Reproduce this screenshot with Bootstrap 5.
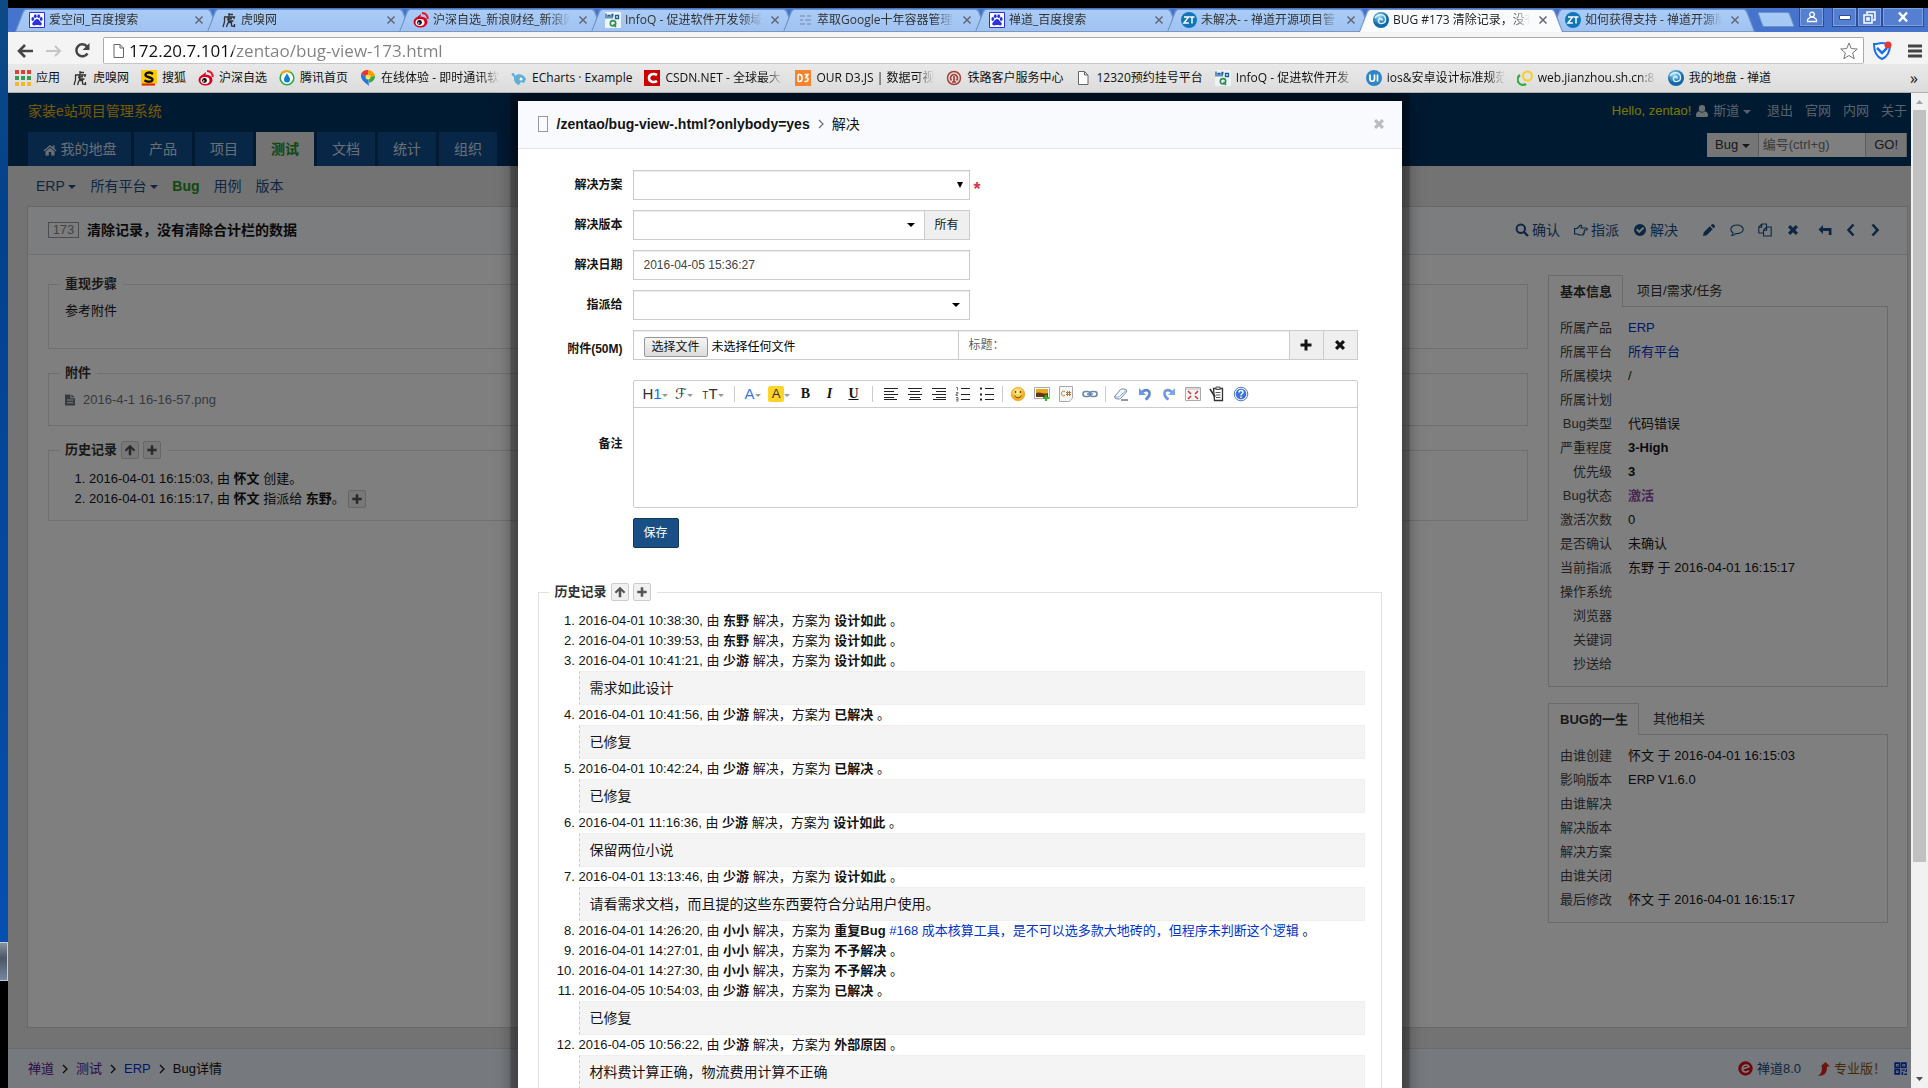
<!DOCTYPE html>
<html lang="zh-CN">
<head>
<meta charset="utf-8">
<meta name="viewport" content="width=device-width, initial-scale=1">
<title>BUG #173 清除记录，没有清除合计栏的数据</title>
<link href="https://cdn.jsdelivr.net/npm/bootstrap@5.3.0/dist/css/bootstrap.min.css" rel="stylesheet">
<style>
body{font-family:"Liberation Sans","Noto Sans CJK SC",sans-serif;font-size:13px;line-height:20px;color:#141414;background:#000;height:100vh;overflow:hidden}
a{text-decoration:none;color:#03c}
button{font-family:inherit;color:inherit}
ol,p,ul{margin:0}
svg{display:block;flex:none}
.ico{width:14px;height:14px;fill:currentColor}
.bare{border:0;background:none;padding:0}
/* desktop edge */
.desk{width:8px;background:linear-gradient(#0d4a86,#04418c 20%,#0550b0 90%)}
.desk-task{height:39px;border:1px solid #c5ccd6;border-left:0;background:linear-gradient(#8a93a0,#4b5666 40%,#74879f)}
.desk-bar{height:107px;background:#000}
/* browser */
.win{min-width:0;padding-top:8px}
.browser{font-family:"Open Sans","Noto Sans CJK SC",sans-serif;font-size:12px}
.strip{height:24px;background:#4673cb;padding-left:7px}
.btab{position:relative;width:204px;margin-right:-12px;height:24px;padding:0 15px 0 14px;gap:4px;color:#333}
.btab::before,.btab::after{content:"";position:absolute;inset:1px 0 0;background:#6f93c9;clip-path:polygon(0 100%,8px 8%,10px 0,calc(100% - 10px) 0,calc(100% - 8px) 8%,100% 100%)}
.btab::after{inset:2px 1px 0;background:linear-gradient(#aaccf6,#9fc2f2);border-bottom:1px solid #7d97be}
.btab.on{z-index:2;color:#222}
.btab.on::after{background:#fafbfd;border:0}
.btab>*{position:relative;z-index:1}
.fade-txt{overflow:hidden;white-space:nowrap;-webkit-mask-image:linear-gradient(to right,#000 85%,transparent)}
.btab .fade-txt{width:137px}
.bx{width:10px;height:10px;color:#667}
.newtab{width:32px;height:15px;background:#a6c8f5;border:1px solid #6f93c9;transform:skewX(20deg);border-radius:2px;margin-left:17px}
.wbtn{height:19px;border:1px solid #2c4f96;border-top:0;background:#5580d2;color:#fff;width:25px;display:flex;align-items:center;justify-content:center;box-shadow:inset 0 0 0 1px #7da0e0}
.wbtn.wide{width:42px}
.tools{height:32px;padding:5px 6px 0 8px;background:#f4f4f4}
.omni{height:27px;border:1px solid #aaa;border-bottom-color:#c5c5c5;border-radius:2px;background:#fff;padding:0 4px 0 8px}
.omni input{border:0;outline:0;font-family:"Open Sans",sans-serif;font-size:17px;line-height:22px;padding:0;color:#777;-webkit-text-fill-color:transparent;background:linear-gradient(to right,#111 104px,#808080 104px);-webkit-background-clip:text;background-clip:text}
.marks{height:29px;padding:1px 10px 2px 7px;gap:12px;background:linear-gradient(#e9e9e9,#dcdcdc);border-bottom:1px solid #b0b0b0}
.marks a{color:#111;display:flex;align-items:center;gap:5px}
.marks .fade-txt{width:118px}
.marks svg,.btab svg.fav{width:16px;height:16px}
/* scrollbar */
.sbar{width:17px;background:#f1f1f1;padding:0 2px}
.sbar-thumb{height:752px;background:#c1c1c1}
/* page */
.zpage{background:#e6e6e6}
.ztop{background:#003464;height:73px;padding-left:20px;color:#d5dfe9}
.brand-txt{color:#f0b400;font-size:14px}
.mnav a{display:block;height:34px;line-height:34px;width:58px;text-align:center;background:#114f8e;color:#d5dfe9;font-size:14px}
.mnav a.wide{width:103px}
.mnav a.on{background:#e6e6e6;color:#229022;font-weight:700}
.mnav{gap:3px}
.caret{display:inline-block;border:4px solid transparent;border-top-color:currentColor;border-bottom:0;vertical-align:middle}
.topbar a{color:#b5c3d2}
.toplinks{gap:12px;padding-top:8px;margin-bottom:12px}
.hello{color:#f0f000}
.qsearch{height:24px;width:200px}
.qsearch>*{border:0;border-right:1px solid #bbb;background:#ececec;font-size:13px;color:#333;padding:0;border-radius:0}
.qsearch input{background:#fff;padding-left:4px}
.snav{height:40px;padding-left:28px;font-size:14px;gap:14px}
.snav a,.acts button{color:#1a4f85}
.snav a.on{color:#229022;font-weight:700}
.zpanel{margin:0 3px 0 19px;background:#fff;border:1px solid #d0d0d0}
.zhead{height:48px;background:#f8fafe;border-bottom:1px solid #dedede;padding:0 27px 2px 20px}
.zhead strong{font-size:14px}
.zbody{padding:19px 19px 19px 20px;gap:20px}
.idtag{border:1px solid #999;color:#888;line-height:14px;width:31px;text-align:center}
.acts{font-size:14px;color:#1a4f85;gap:14px}
.acts .bare{display:flex;align-items:center;gap:3px}
.acts .slim{width:10px}
.acts .lastop{margin-right:10px}
fieldset.box{border:1px solid #e1e1e1;padding:7px 16px 11px;margin-bottom:14px}
fieldset.box legend{display:flex;align-items:center;gap:4px;float:none;width:fit-content;font-size:13px;line-height:20px;font-weight:700;margin:0 0 0 -6px;padding:0 6px;color:#333}
fieldset.hist{padding-top:9px}
.mini{width:18px;height:18px;border:1px solid #ccc;background:#f1f1f1;border-radius:2px;padding:2px;color:#555;display:inline-block;vertical-align:-4px}
.mini svg{width:12px;height:12px;fill:currentColor}
.log li .mini{vertical-align:top;margin-top:1px}
ol.log{padding-left:24px}
.zside{width:340px;padding-top:1px}
.ztabs a{display:block;height:31px;line-height:31px;padding:0 14px;color:#333}
.ztabs a.on{font-weight:700;border:1px solid #d5d5d5;border-bottom:0;background:#fff;padding:0 10px 0 11px;margin-bottom:-1px;height:32px;position:relative}
.zbox{border:1px solid #d5d5d5;padding:9px 11px 10px}
.zbox th{font-weight:400;width:52px;text-align:right;color:#444;padding:2px 0}
.zbox td{padding:2px 0 2px 16px;height:24px}
.zfoot{height:40px;margin-top:20px;background:#ecf2fb;border-top:1px solid #d5d5d5;padding-left:20px}
.visited{color:#551a8b}
/* overlay + dialog */
.shade{position:absolute;inset:0;background:rgba(0,0,0,.5);padding-top:8px;overflow:hidden;z-index:5}
.dlg{width:884px;height:1200px;background:#fff;box-shadow:0 0 0 7px rgba(0,0,0,.08),0 0 0 8px rgba(0,0,0,.15),0 0 14px 7px rgba(0,0,0,.35)}
.dlg-head{height:48px;background:#f8fafe;border-bottom:1px solid #e5e5e5;padding:0 16px 2px 20px;font-size:14px}
.tofu{width:10px;height:16px;border:1px solid #999;margin-right:9px}
.dlg-body{padding:21px 20px}
.frow{gap:10px;margin-bottom:10px;font-size:12px}
.flabel{width:85px;text-align:right;font-weight:700;flex:none;line-height:30px}
.star{font-size:18px;line-height:18px;padding-top:8px}
.f{height:30px;border:1px solid #ccc;border-radius:0;font-size:12px;line-height:18px;padding:0 10px;color:#444;background-color:#fff;box-shadow:inset 0 1px 1px rgba(0,0,0,.075)}
select.f{background-repeat:no-repeat;background-size:8px 4px;background-position:right 9px center;background-image:url("data:image/svg+xml,%3Csvg xmlns='http://www.w3.org/2000/svg' viewBox='0 0 8 4'%3E%3Cpath d='M0 0h8L4 4z'/%3E%3C/svg%3E")}
select.f.native{background-size:6px 6px;background-position:right 6px center;background-image:url("data:image/svg+xml,%3Csvg xmlns='http://www.w3.org/2000/svg' viewBox='0 0 6 6'%3E%3Cpath d='M0 0h6L3 6z'/%3E%3C/svg%3E")}
.w-ctl{width:337px}
.addon{height:30px;width:34px;flex:none;border:1px solid #ccc;border-left:0;background:#efefef;font-size:12px;display:flex;align-items:center;justify-content:center;padding:0}
.addon.all{width:45px}
.w-full{width:725px}
.w-file{width:326px;flex:none}
.pick{border:1px solid #999;border-radius:2px;background:linear-gradient(#f5f5f5,#dcdcdc);line-height:18px;padding:0 7px;color:#111}
.ked{border:1px solid #ccc;border-radius:2px}
.kbar{height:27px;border-bottom:1px solid #ccc;padding-left:7px}
.kbar button{border:0;background:none;padding:0;width:24px;height:24px;display:flex;align-items:center;justify-content:center}
.kbar button.k{font-size:15px;color:#333;width:29px}
.kbar button.k-blue{color:#3b78e7;width:24px}
.kbar i{width:7px;height:16px;background:linear-gradient(#ccc,#ccc) center/1px 100% no-repeat}
.kbar i.gapw{width:13px}
.kbar svg{width:16px;height:16px}
.kbar .caret{border-width:3px;border-bottom:0;border-top-color:#999;margin-top:2px}
.kbar .serif{font:700 14px "Liberation Serif",serif}
.k-mark{background:#ffd42a;border-radius:2px;width:16px;line-height:16px;font-size:13px}
.k-small{font-size:10px;padding-top:3px}
.k-script{font-family:"DejaVu Sans",sans-serif}
.ked textarea{display:block;border:0;width:100%;height:99px;resize:none;outline:0}
.save{height:30px;width:46px;font-size:12px;padding:0;border-radius:2px;background:#1a4f85;border:1px solid #113857;color:#fff}
.dlg .hist{margin-top:34px;height:700px}
.note{background:#f4f4f4;border:1px solid #efefef;border-left:1px dashed #ccc;padding:6px 10px;font-size:14px}
</style>
<script src="https://cdn.jsdelivr.net/npm/bootstrap@5.3.0/dist/js/bootstrap.bundle.min.js"></script>
</head>
<body>
<svg width="0" height="0" class="position-absolute" aria-hidden="true">
<defs>
<radialGradient id="gBlue" cx=".4" cy=".3"><stop offset="0" stop-color="#9be0f7"/><stop offset="1" stop-color="#1267ab"/></radialGradient>
<radialGradient id="gSm" cx=".45" cy=".35"><stop offset="0" stop-color="#fff3a0"/><stop offset="1" stop-color="#f0b020"/></radialGradient>
</defs>
<symbol id="baidu" viewBox="0 0 16 16"><path fill="#fff" stroke="#2932e1" d="M.5.5h15v15H.5z"/><g fill="#2932e1"><ellipse cx="3.8" cy="7" rx="1.4" ry="1.9"/><ellipse cx="6.3" cy="4.2" rx="1.4" ry="1.9"/><ellipse cx="9.7" cy="4.2" rx="1.4" ry="1.9"/><ellipse cx="12.2" cy="7" rx="1.4" ry="1.9"/><path d="M8 7c1.800 0 2.600 2 4 3.200s.8 3.300-1 3.300c-1.200 0-1.800-.4-3-.4s-1.800.4-3 .4c-1.800 0-2.400-2.100-1-3.300S6.200 7 8 7z"/></g></symbol>
<symbol id="huxiu" viewBox="0 0 16 16"><g fill="none" stroke="#333" stroke-width="1.300"><path d="M8 1v4M8 2.500h4M3 5h10.500l-.8 2M3.500 5v5L2 15M6 7.500l5-1M7.500 5.500v3.500h5M7 10.500 5.500 15M7 10.500h3.500v3.500l3 .5V12"/></g></symbol>
<symbol id="weibo" viewBox="0 0 16 16"><ellipse cx="7.500" cy="10" rx="7" ry="5.500" fill="#d9001b"/><path d="M9 1c4 0 6 3 5.500 6" stroke="#e6162d" stroke-width="2" fill="none"/><path d="M3 6l5-4-1 4z" fill="#d9001b"/><ellipse cx="7" cy="10.500" rx="4.500" ry="3.400" fill="#fff"/><circle cx="6.500" cy="10.500" r="2.400" fill="#111"/><circle cx="5.800" cy="11" r=".8" fill="#fff"/></symbol>
<symbol id="infoq" viewBox="0 0 16 16"><path fill="#eef3f8" d="M0 0h16v16H0z"/><path d="M1 1.500v5M3 6.500v-3h2v3M7 6.500V2.500h1.500M6.300 4h2M10.500 3.500h3v3h-3z" fill="none" stroke="#1d5f9c" stroke-width="1.300"/><circle cx="8" cy="11.300" r="2.700" fill="none" stroke="#2f8f4e" stroke-width="1.600"/><path d="M8.500 12l2.500 3" stroke="#2f8f4e" stroke-width="1.500"/></symbol>
<symbol id="lines" viewBox="0 0 16 16"><path d="M3 4h5M10 4h4M3 8h3M8 8h6M3 12h5M10 12h4" stroke="#8a9cb8" stroke-width="1.500"/></symbol>
<symbol id="zt" viewBox="0 0 16 16"><circle cx="8" cy="8" r="8" fill="#0f77b8"/><path d="M3 5h4.500L3 11h4.800M8.500 5h5M11 5v6.500" fill="none" stroke="#fff" stroke-width="1.500"/></symbol>
<symbol id="zen" viewBox="0 0 16 16"><circle cx="8" cy="8" r="8" fill="url(#gBlue)"/><path d="M2 6c3-5 10-4 10.500 1S6 13 5.500 9.500 9 6 9.500 8.500" fill="none" stroke="#d8f3fd" stroke-width="1.400"/></symbol>
<symbol id="page" viewBox="0 0 12 16"><path d="M1.500 1.500h6l3.500 3.500v9.500h-9.500zM7.500 1.500V5H11" fill="#fff" stroke="#666"/></symbol>
<symbol id="cross" viewBox="0 0 10 10"><path d="M1.500 1.500l7 7M8.500 1.500l-7 7" stroke="currentColor" stroke-width="1.500"/></symbol>
<symbol id="times" viewBox="0 0 14 14"><path d="M2 4.200 4.200 2 7 4.800 9.800 2 12 4.200 9.200 7 12 9.800 9.800 12 7 9.200 4.200 12 2 9.800 4.800 7z"/></symbol>
<symbol id="plus" viewBox="0 0 14 14"><path d="M5.500 1.500h3v4h4v3h-4v4h-3v-4h-4v-3h4z"/></symbol>
<symbol id="up" viewBox="0 0 14 14"><path d="M7 .8l6.200 6.200-1.700 1.700L8.500 5.900V13h-3V5.900L2.500 8.700.8 7z"/></symbol>
<symbol id="home" viewBox="0 0 14 14"><path d="M7 2 .5 7.500l.8.900L7 3.700l5.700 4.700.8-.9L11.500 5.800V2.500h-1.800v1.800zM7 4.800 2.500 8.500V12.500h3.300V9h2.400v3.500h3.300V8.500z"/></symbol>
<symbol id="user" viewBox="0 0 14 14"><path d="M7 1a3.200 3.400 0 0 1 3.200 3.400A3.200 3.400 0 0 1 7 7.800 3.200 3.400 0 0 1 3.800 4.400 3.200 3.400 0 0 1 7 1zM4 7.300c1.800 1.700 4.200 1.700 6 0 2.200.3 3 2.500 3 4.200 0 1-.7 1.500-1.600 1.500H2.600C1.700 13 1 12.500 1 11.500c0-1.700.8-3.900 3-4.200z"/></symbol>
<symbol id="search" viewBox="0 0 14 14"><circle cx="5.800" cy="5.800" r="4.200" fill="none" stroke="currentColor" stroke-width="2"/><path d="M9 9l4 4" stroke="currentColor" stroke-width="2.400"/></symbol>
<symbol id="hand" viewBox="0 0 14 14"><path d="M.6 5.500h2.600L6 2.500c.9-.8 2 .1 1.500 1.200L7 5h5c1.700 0 1.700 2 0 2H9.800c1 .2 1 1.500 0 1.700.8.200.7 1.400-.2 1.600.5.300.4 1.700-.9 1.700H6c-1.500 0-1.800-1-2.800-1H.6z" fill="none" stroke="currentColor" stroke-width="1.200"/></symbol>
<symbol id="okc" viewBox="0 0 14 14"><path fill-rule="evenodd" d="M7 1a6 6 0 1 1 0 12A6 6 0 0 1 7 1zM3 7l3.300 3.300 5-5-1.400-1.400-3.600 3.600L4.500 5.600z"/></symbol>
<symbol id="pencil" viewBox="0 0 14 14"><path d="M1 13l.8-3.700 6-6 2.900 2.900-6 6zM8.700 2.400 10 1.200c.4-.4 1-.4 1.400 0l1.400 1.400c.4.400.4 1 0 1.400l-1.200 1.300z"/></symbol>
<symbol id="bubble" viewBox="0 0 14 14"><path d="M7 2c3.500 0 6.200 1.900 6.200 4.300S10.500 10.600 7 10.600l-1.200-.1C5 11.500 3.500 12.300 2 12.400c.7-.8 1-1.600 1-2.600C1.600 9 .8 7.700.8 6.300.8 3.900 3.500 2 7 2z" fill="none" stroke="currentColor" stroke-width="1.100"/></symbol>
<symbol id="copy" viewBox="0 0 14 14"><path d="M5 10H.8V4L3.800 1H8.500v2.500M.8 4.200h3V1M5.500 7.200 8.500 4h4.700v9H5.500zM5.500 7.300H8.600V4" fill="none" stroke="currentColor" stroke-width="1.100"/></symbol>
<symbol id="reply" viewBox="0 0 14 14"><path d="M5 2v3h8.500v7h-2.700V8H5v3L.5 6.500z"/></symbol>
<symbol id="left" viewBox="0 0 10 14"><path d="M7.500 1.500 2.500 7l5 5.500" fill="none" stroke="currentColor" stroke-width="2.600"/></symbol>
<symbol id="right" viewBox="0 0 10 14"><path d="M2.500 1.500l5 5.500-5 5.500" fill="none" stroke="currentColor" stroke-width="2.600"/></symbol>
<symbol id="chev" viewBox="0 0 14 14"><path d="M5 3l4 4-4 4" fill="none" stroke="currentColor" stroke-width="1.300"/></symbol>
<symbol id="file" viewBox="0 0 11 14"><path fill-rule="evenodd" d="M0 1h6v4h5v8H0zM7 1l4 3H7zM2 6.500h7v1H2zm0 3h7v1H2z"/></symbol>
</svg>
<div class="d-flex h-100">
  <div class="desk d-flex flex-column justify-content-end flex-shrink-0"><div class="desk-task"></div><div class="desk-bar"></div></div>
  <div class="win d-flex flex-column flex-grow-1">
    <header class="browser">
      <div class="strip d-flex">
        <a class="btab d-flex align-items-center" href="#"><svg class="fav"><use href="#baidu"/></svg><span class="fade-txt">爱空间_百度搜索</span><svg class="bx ms-auto"><use href="#cross"/></svg></a>
        <a class="btab d-flex align-items-center" href="#"><svg class="fav"><use href="#huxiu"/></svg><span class="fade-txt">虎嗅网</span><svg class="bx ms-auto"><use href="#cross"/></svg></a>
        <a class="btab d-flex align-items-center" href="#"><svg class="fav"><use href="#weibo"/></svg><span class="fade-txt">沪深自选_新浪财经_新浪网</span><svg class="bx ms-auto"><use href="#cross"/></svg></a>
        <a class="btab d-flex align-items-center" href="#"><svg class="fav"><use href="#infoq"/></svg><span class="fade-txt">InfoQ - 促进软件开发领域</span><svg class="bx ms-auto"><use href="#cross"/></svg></a>
        <a class="btab d-flex align-items-center" href="#"><svg class="fav"><use href="#lines"/></svg><span class="fade-txt">萃取Google十年容器管理</span><svg class="bx ms-auto"><use href="#cross"/></svg></a>
        <a class="btab d-flex align-items-center" href="#"><svg class="fav"><use href="#baidu"/></svg><span class="fade-txt">禅道_百度搜索</span><svg class="bx ms-auto"><use href="#cross"/></svg></a>
        <a class="btab d-flex align-items-center" href="#"><svg class="fav"><use href="#zt"/></svg><span class="fade-txt">未解决- - 禅道开源项目管</span><svg class="bx ms-auto"><use href="#cross"/></svg></a>
        <a class="btab on d-flex align-items-center" href="#"><svg class="fav"><use href="#zen"/></svg><span class="fade-txt">BUG #173 清除记录，没有</span><svg class="bx ms-auto"><use href="#cross"/></svg></a>
        <a class="btab d-flex align-items-center" href="#"><svg class="fav"><use href="#zt"/></svg><span class="fade-txt">如何获得支持 - 禅道开源版</span><svg class="bx ms-auto"><use href="#cross"/></svg></a>
        <button class="newtab mt-1 p-0" aria-label="新标签页"></button>
        <div class="d-flex ms-auto me-1">
          <button class="wbtn me-2 p-0" aria-label="用户"><svg width="12" height="12" viewBox="0 0 12 12"><circle cx="6" cy="3.500" r="2.300" fill="none" stroke="#fff" stroke-width="1.300"/><path d="M1.500 10.500V8.500L4.500 6h3l3 2.500v2z" fill="none" stroke="#fff" stroke-width="1.300"/></svg></button>
          <button class="wbtn p-0" aria-label="最小化"><svg width="12" height="5" viewBox="0 0 12 5"><path d="M.5.500h11v4H.5z" fill="#fff" stroke="#2c4f96"/></svg></button>
          <button class="wbtn p-0" aria-label="还原"><svg width="13" height="13" viewBox="0 0 13 13"><path d="M4 3V1h8v8h-2M1 4h8v8H1zM4 7h2v2H4z" fill="none" stroke="#fff" stroke-width="1.500"/></svg></button>
          <button class="wbtn wide p-0" aria-label="关闭"><svg width="12" height="12" viewBox="0 0 12 12"><path d="M2 1.500l8 9M10 1.500l-8 9" stroke="#fff" stroke-width="2.400"/></svg></button>
        </div>
      </div>
      <div class="tools d-flex align-items-center">
        <button class="bare me-2 pe-1" aria-label="后退"><svg width="18" height="16" viewBox="0 0 18 16"><path d="M17 8H3M9 2 3 8l6 6" fill="none" stroke="#444" stroke-width="2.600"/></svg></button>
        <button class="bare me-2 pe-1" aria-label="前进"><svg width="16" height="16" viewBox="0 0 16 16"><path d="M0 8h14M9 3l5 5-5 5" fill="none" stroke="#c5c5c5" stroke-width="2"/></svg></button>
        <button class="bare me-2 pe-1" aria-label="重新加载"><svg width="17" height="17" viewBox="0 0 17 17"><path d="M13.500 11.500A6 6 0 1 1 13 4.500" fill="none" stroke="#444" stroke-width="2.500"/><path d="M15.500 1v7h-7z" fill="#444"/></svg></button>
        <div class="omni d-flex align-items-center flex-grow-1"><svg width="13" height="16"><use href="#page"/></svg><input class="flex-grow-1 ms-1" type="text" aria-label="地址" value="172.20.7.101/zentao/bug-view-173.html"><button class="bare" aria-label="收藏"><svg width="20" height="20" viewBox="0 0 20 20"><path d="M10 2l2.300 5.600 6 .4-4.600 3.900 1.500 5.900L10 14.500l-5.200 3.300 1.500-5.900L1.700 8l6-.4z" fill="#fff" stroke="#777"/></svg></button></div>
        <svg class="ms-2" width="20" height="20" viewBox="0 0 20 20"><path d="M2 3c4 0 5-1 8-1s4 1 8 1c0 8-3 13-8 15C5 16 2 11 2 3z" fill="#fff" stroke="#1f6ff0" stroke-width="2"/><path d="M5 7l5 5 5-5" fill="none" stroke="#1f6ff0" stroke-width="2.500"/><circle cx="16" cy="4" r="3.500" fill="#e33b2e"/></svg>
        <button class="bare ms-3" aria-label="菜单"><svg width="14" height="14" viewBox="0 0 14 14"><path d="M0 2h14M0 7h14M0 12h14" stroke="#444" stroke-width="2.800"/></svg></button>
      </div>
      <nav class="marks d-flex align-items-center">
        <a href="#"><svg viewBox="0 0 16 16"><g stroke-width="4" stroke-dasharray="4 2"><path d="M0 2h16" stroke="#e0402f"/><path d="M0 8h16" stroke="#3c9c57"/><path d="M0 14h16" stroke="#f0b92c"/></g></svg>应用</a>
        <a href="#"><svg><use href="#huxiu"/></svg>虎嗅网</a>
        <a href="#"><svg viewBox="0 0 16 16"><path fill="#fc0" d="M0 0h16v13l-4 3H0z"/><path d="M12 4C9 1.500 4.500 2.500 4.500 5s7 2 7 4.500-5 3-8 .8" fill="none" stroke="#111" stroke-width="2.400"/><path d="M1 14.500h13" stroke="#d22" stroke-width="2"/></svg>搜狐</a>
        <a href="#"><svg><use href="#weibo"/></svg>沪深自选</a>
        <a href="#"><svg viewBox="0 0 16 16"><circle cx="8" cy="8" r="6.800" fill="#fff" stroke="#2aa84a" stroke-width="1.600"/><path d="M2 4a7 7 0 0 1 9-2" stroke="#f5a800" stroke-width="2" fill="none"/><path d="M8 3c1 3 3 4 3 6.500a3 3 0 0 1-6 0C5 7 7 6 8 3z" fill="#0a7fd0"/></svg>腾讯首页</a>
        <a href="#"><svg viewBox="0 0 16 16"><path d="M8 7 1 4a7 7 0 0 1 7-4z" fill="#e33"/><path d="M8 7V0a7 7 0 0 1 7 6z" fill="#f90"/><path d="M8 7l7-1c0 4-3 6-6 7z" fill="#3a4"/><path d="M8 7l1 9C6 13 0 10 1 4z" fill="#27d"/><circle cx="8" cy="7" r="2.500" fill="#fd5"/></svg><span class="fade-txt">在线体验 - 即时通讯软</span></a>
        <a href="#"><svg viewBox="0 0 16 16"><path d="M1 3c2 0 3 1 3 3 3-3 9-2 11 3l-2 4-3-1-2 3C3 14 3 9 3 7 1 6 0 4 1 3z" fill="#5fb0d4"/><circle cx="10" cy="9" r="1.500" fill="#fff"/></svg>ECharts · Example</a>
        <a href="#"><svg viewBox="0 0 16 16"><path fill="#c00" d="M0 0h16v16H0z"/><path d="M13 5c-3-2-8-1-8 3s5 5 8 3" fill="none" stroke="#fff" stroke-width="2.600"/></svg><span class="fade-txt">CSDN.NET - 全球最大</span></a>
        <a href="#"><svg viewBox="0 0 16 16"><path fill="#f9832a" d="M0 0h16v16H0z"/><path d="M3 4.500v7M3 4.500h1.500C8 4.500 8 11.500 4.500 11.500H3M9.500 4.500h3.500L11 7.500c3 0 2.500 4-.5 4H9.500" fill="none" stroke="#fff" stroke-width="1.600"/></svg><span class="fade-txt">OUR D3.JS | 数据可视</span></a>
        <a href="#"><svg viewBox="0 0 16 16"><g fill="none" stroke="#a8403a"><circle cx="8" cy="8" r="6.500" stroke-width="1.500"/><path d="M5.500 10.500a3.500 3.500 0 1 1 5 0M8 6v6M6 12h4" stroke-width="1.700"/></g></svg>铁路客户服务中心</a>
        <a href="#"><svg><use href="#page"/></svg>12320预约挂号平台</a>
        <a href="#"><svg><use href="#infoq"/></svg><span class="fade-txt">InfoQ - 促进软件开发</span></a>
        <a href="#"><svg viewBox="0 0 16 16"><circle cx="8" cy="8" r="8" fill="#2e86c9"/><path d="M4 4.500v4.500c0 3 4.500 3 4.500 0V4.500M11.500 4.500v7" fill="none" stroke="#fff" stroke-width="1.700"/></svg><span class="fade-txt">ios&amp;安卓设计标准规范</span></a>
        <a href="#"><svg viewBox="0 0 16 16"><circle cx="10.500" cy="6" r="4.500" fill="none" stroke="#f5d020" stroke-width="2"/><path d="M3 5a5 5 0 0 0 6 9" fill="none" stroke="#2fae3e" stroke-width="2.200"/></svg><span class="fade-txt">web.jianzhou.sh.cn:8</span></a>
        <a href="#"><svg><use href="#zen"/></svg>我的地盘 - 禅道</a>
        <button class="bare ms-auto fs-6" aria-label="更多书签">»</button>
      </nav>
    </header>
    <div class="d-flex flex-grow-1 overflow-hidden">
      <main class="zpage position-relative d-flex flex-column flex-grow-1">
        <div class="ztop d-flex justify-content-between">
          <div class="d-flex flex-column justify-content-between">
            <div class="brand-txt pt-2">家装e站项目管理系统</div>
            <nav class="mnav d-flex">
              <a href="#" class="wide"><svg class="ico d-inline-block align-middle me-1"><use href="#home"/></svg>我的地盘</a><a href="#">产品</a><a href="#">项目</a><a href="#" class="on">测试</a><a href="#">文档</a><a href="#">统计</a><a href="#">组织</a>
            </nav>
          </div>
          <div class="topbar d-flex flex-column align-items-end me-1">
            <div class="toplinks d-flex">
              <span class="d-flex align-items-center gap-1 me-1"><span class="hello">Hello, zentao!</span><svg class="ico"><use href="#user"/></svg><a href="#">斯道 <i class="caret"></i></a></span>
              <a href="#">退出</a><a href="#">官网</a><a href="#">内网</a><a href="#">关于</a>
            </div>
            <form class="qsearch d-flex"><button type="button" class="px-2">Bug <i class="caret"></i></button><input type="text" class="flex-grow-1 w-50" aria-label="编号" placeholder="编号(ctrl+g)"><button type="button" class="px-2">GO!</button></form>
          </div>
        </div>
        <nav class="snav d-flex align-items-center"><a href="#">ERP <i class="caret"></i></a><a href="#">所有平台 <i class="caret"></i></a><a href="#" class="on">Bug</a><a href="#">用例</a><a href="#">版本</a></nav>
        <section class="zpanel flex-grow-1">
          <div class="zhead d-flex align-items-center">
            <span class="idtag me-2">173</span><strong>清除记录，没有清除合计栏的数据</strong>
            <div class="acts d-flex ms-auto align-items-center">
              <button class="bare"><svg class="ico"><use href="#search"/></svg>确认</button>
              <button class="bare"><svg class="ico"><use href="#hand"/></svg>指派</button>
              <button class="bare lastop"><svg class="ico"><use href="#okc"/></svg>解决</button>
              <button class="bare" aria-label="编辑"><svg class="ico"><use href="#pencil"/></svg></button>
              <button class="bare" aria-label="备注"><svg class="ico"><use href="#bubble"/></svg></button>
              <button class="bare" aria-label="复制"><svg class="ico"><use href="#copy"/></svg></button>
              <button class="bare me-1" aria-label="删除"><svg class="ico"><use href="#times"/></svg></button>
              <button class="bare" aria-label="返回"><svg class="ico"><use href="#reply"/></svg></button>
              <button class="bare" aria-label="上一个"><svg class="ico slim"><use href="#left"/></svg></button>
              <button class="bare" aria-label="下一个"><svg class="ico slim"><use href="#right"/></svg></button>
            </div>
          </div>
          <div class="zbody d-flex">
            <div class="flex-grow-1">
              <fieldset class="box"><legend>重现步骤</legend><p class="pb-3">参考附件</p></fieldset>
              <fieldset class="box"><legend>附件</legend><a href="#" class="d-flex align-items-center gap-2 mb-1 text-secondary"><svg class="ico slim" style="width:10px"><use href="#file"/></svg>2016-4-1 16-16-57.png</a></fieldset>
              <fieldset class="box hist"><legend>历史记录 <button class="mini" aria-label="倒序"><svg><use href="#up"/></svg></button> <button class="mini" aria-label="展开"><svg><use href="#plus"/></svg></button></legend>
                <ol class="log"><li>2016-04-01 16:15:03, 由 <b>怀文</b> 创建。</li><li>2016-04-01 16:15:17, 由 <b>怀文</b> 指派给 <b>东野</b>。 <button class="mini" aria-label="展开"><svg><use href="#plus"/></svg></button></li></ol></fieldset>
            </div>
            <aside class="zside flex-shrink-0">
              <nav class="ztabs d-flex"><a class="on" href="#">基本信息</a><a href="#">项目/需求/任务</a></nav>
              <div class="zbox mb-3"><table class="w-100">
                <tr><th>所属产品</th><td><a href="#">ERP</a></td></tr><tr><th>所属平台</th><td><a href="#">所有平台</a></td></tr><tr><th>所属模块</th><td>/</td></tr><tr><th>所属计划</th><td></td></tr><tr><th>Bug类型</th><td>代码错误</td></tr><tr><th>严重程度</th><td><b>3-High</b></td></tr><tr><th>优先级</th><td><b>3</b></td></tr><tr><th>Bug状态</th><td><b style="color:#8e4ba8">激活</b></td></tr><tr><th>激活次数</th><td>0</td></tr><tr><th>是否确认</th><td>未确认</td></tr><tr><th>当前指派</th><td>东野 于 2016-04-01 16:15:17</td></tr><tr><th>操作系统</th><td></td></tr><tr><th>浏览器</th><td></td></tr><tr><th>关键词</th><td></td></tr><tr><th>抄送给</th><td></td></tr>
              </table></div>
              <nav class="ztabs d-flex"><a class="on" href="#">BUG的一生</a><a href="#">其他相关</a></nav>
              <div class="zbox"><table class="w-100">
                <tr><th>由谁创建</th><td>怀文 于 2016-04-01 16:15:03</td></tr><tr><th>影响版本</th><td>ERP V1.6.0</td></tr><tr><th>由谁解决</th><td></td></tr><tr><th>解决版本</th><td></td></tr><tr><th>解决方案</th><td></td></tr><tr><th>由谁关闭</th><td></td></tr><tr><th>最后修改</th><td>怀文 于 2016-04-01 16:15:17</td></tr>
              </table></div>
            </aside>
          </div>
        </section>
        <footer class="zfoot d-flex align-items-center">
          <a href="#" class="visited">禅道</a><svg class="ico mx-1"><use href="#chev"/></svg><a href="#" class="visited">测试</a><svg class="ico mx-1"><use href="#chev"/></svg><a href="#">ERP</a><svg class="ico mx-1"><use href="#chev"/></svg><span>Bug详情</span>
          <a href="#" class="ms-auto d-flex align-items-center gap-1" style="color:#1a4f85"><svg width="15" height="15" viewBox="0 0 15 15"><circle cx="7.500" cy="7.500" r="7.200" fill="#d8101c"/><path d="M3.800 8.300l7.200-2.500C10 3 5 3.500 4.300 7c-.5 4.500 4.500 5 6.500 2.500" fill="none" stroke="#fff" stroke-width="1.600"/></svg>禅道8.0</a>
          <a href="#" class="ms-3 d-flex align-items-center gap-1" style="color:#8a5510"><svg width="13" height="14" viewBox="0 0 13 14"><path d="M8.500 0L13 4.500h-3C10 11 8 14 0 14c4-1.500 5-4 5-9.500H3.500z" fill="#d8281c"/></svg>专业版！</a>
          <svg class="ms-2 me-1" width="13" height="13" viewBox="0 0 12 12"><path d="M1 1h4v4H1zM7 1h4v4H7zM1 7h4v4H1z" fill="none" stroke="#03c" stroke-width="1.500"/><path d="M2.500 2.500h1v1h-1zM8.500 2.500h1v1h-1zM2.500 8.500h1v1h-1zM7 7h3v2h2V6.500h-1V8H7zM7 9h1.500v3H7zM9.500 10.500H12V12H9.500z" fill="#03c"/></svg>
        </footer>
        <div class="shade">
          <div class="dlg mx-auto" role="dialog" aria-label="解决">
            <div class="dlg-head d-flex align-items-center"><span class="tofu"></span><strong>/zentao/bug-view-.html?onlybody=yes</strong><svg class="ico text-secondary mx-1"><use href="#chev"/></svg><span>解决</span><button class="bare ms-auto text-black-50" aria-label="关闭"><svg class="ico opacity-50"><use href="#times"/></svg></button></div>
            <div class="dlg-body">
              <form>
                <div class="frow d-flex"><label class="flabel" for="resolution">解决方案</label><div class="d-flex align-items-center gap-1"><select id="resolution" class="form-select f native w-ctl"><option></option></select><span class="star text-danger fw-bold">*</span></div></div>
                <div class="frow d-flex"><label class="flabel" for="build">解决版本</label><div class="d-flex w-ctl"><select id="build" class="form-select f flex-grow-1"><option></option></select><button type="button" class="addon all">所有</button></div></div>
                <div class="frow d-flex"><label class="flabel" for="date">解决日期</label><input id="date" type="text" class="form-control f w-ctl" value="2016-04-05 15:36:27"></div>
                <div class="frow d-flex"><label class="flabel" for="assign">指派给</label><select id="assign" class="form-select f w-ctl"><option></option></select></div>
                <div class="frow d-flex mb-3"><label class="flabel pt-1" for="upfile">附件(50M)</label>
                  <div class="d-flex w-full"><div class="f w-file d-flex align-items-center gap-1 pt-1"><input id="upfile" type="file" class="visually-hidden"><label class="pick" for="upfile">选择文件</label><span class="text-black">未选择任何文件</span></div>
                  <input type="text" class="form-control f flex-grow-1 border-start-0 w-50" aria-label="标题" placeholder="标题："><button type="button" class="addon" aria-label="添加"><svg class="ico"><use href="#plus"/></svg></button><button type="button" class="addon" aria-label="移除"><svg class="ico"><use href="#times"/></svg></button></div></div>
                <div class="frow d-flex align-items-center"><label class="flabel" for="comment">备注</label>
                  <div class="ked w-full">
                    <div class="kbar d-flex align-items-center">
                      <button type="button" class="k">H<span class="text-primary">1</span><b class="caret"></b></button>
                      <button type="button" class="k k-script">ℱ<b class="caret"></b></button>
                      <button type="button" class="k"><span class="k-small">T</span>T<b class="caret"></b></button>
                      <i class="gapw"></i>
                      <button type="button" class="k k-blue">A<b class="caret"></b></button>
                      <button type="button" class="k"><span class="k-mark">A</span><b class="caret"></b></button>
                      <button type="button" class="serif">B</button>
                      <button type="button" class="serif fst-italic">I</button>
                      <button type="button" class="serif text-decoration-underline">U</button>
                      <i class="gapw"></i>
                      <button type="button" aria-label="左对齐"><svg viewBox="0 0 16 16"><path d="M1 2.500h14M1 5.500h10M1 8.500h14M1 11.500h10M1 13.500h13" stroke="#222"/></svg></button>
                      <button type="button" aria-label="居中"><svg viewBox="0 0 16 16"><path d="M1 2.500h14M3 5.500h10M1 8.500h14M3 11.500h10M2 13.500h12" stroke="#222"/></svg></button>
                      <button type="button" aria-label="右对齐"><svg viewBox="0 0 16 16"><path d="M1 2.500h14M5 5.500h10M1 8.500h14M5 11.500h10M2 13.500h13" stroke="#222"/></svg></button>
                      <button type="button" aria-label="编号"><svg viewBox="0 0 16 16"><path d="M6 2.500h9M6 8.500h9M6 13.500h9" stroke="#222"/><path d="M1 1.500h1.500v3M1 6.500h2v1.500H1v1.500h2M1 11.500h2v3.500H1M1 13.300h2" fill="none" stroke="#555" stroke-width=".8"/></svg></button>
                      <button type="button" aria-label="列表"><svg viewBox="0 0 16 16"><path d="M6 2.500h9M6 8.500h9M6 13.500h9" stroke="#222"/><path d="M1 1.500h2v2H1zM1 7.500h2v2H1zM1 12.500h2v2H1z" fill="#222"/></svg></button>
                      <i></i>
                      <button type="button" aria-label="表情"><svg viewBox="0 0 16 16"><circle cx="8" cy="8" r="6.800" fill="url(#gSm)" stroke="#e0a020" stroke-width=".6"/><path d="M4.500 9.500c1.500 3 5.500 3 7 0" fill="none" stroke="#7a4a00"/><path d="M5.500 5v2M10.500 5v2" stroke="#7a4a00" stroke-width="1.400"/></svg></button>
                      <button type="button" aria-label="图片"><svg viewBox="0 0 16 16"><path d="M.5 1.500h15v11H.5z" fill="#fff" stroke="#aaa"/><path d="M2 3h12v8H2z" fill="#f0a51c"/><path d="M2 7c4-2 8 2 12 0v4H2z" fill="#5b3d12"/><path d="M12 9v6M9 12h6" stroke="#35b035" stroke-width="2.200"/></svg></button>
                      <button type="button" aria-label="代码"><svg viewBox="0 0 16 16"><path d="M1.500.500h13V12l-3 3.500h-10z" fill="#f6f6f6" stroke="#aaa"/><path d="M7 5.500C5 4.500 3.500 5.500 3.500 7.500S5 10.500 7 9.500M9.500 5v5M11.500 5v5M8 6.500h5M8 8.500h5" fill="none" stroke="#b87830"/></svg></button>
                      <button type="button" aria-label="链接"><svg viewBox="0 0 16 16"><g fill="none" stroke="#6d86ad" stroke-width="1.600"><rect x="1" y="5.500" width="7" height="5" rx="2.500"/><rect x="8" y="5.500" width="7" height="5" rx="2.500"/><path d="M5 8h6"/></g></svg></button>
                      <i></i>
                      <button type="button" aria-label="清除格式"><svg viewBox="0 0 16 16"><path d="M1.500 10.500 7.500 3.500c.8-.8 5-.8 6 .5.300.8 0 1.800-.5 2.500L7.500 12.500c-1 .8-4 .8-5.500-.5z" fill="#f4f8ff" stroke="#6f86b5"/><path d="M2 10.500c1.500.8 3.500.8 4.500 0L13 4.500" fill="none" stroke="#8ea3cc"/><path d="M8 14h7" stroke="#334"/></svg></button>
                      <button type="button" aria-label="撤销"><svg viewBox="0 0 16 16"><path d="M4.500 7C7 3 13 3 12.500 8c-.2 2-1.500 4-4 5.500" fill="none" stroke="#5f88d8" stroke-width="2.600"/><path d="M2 2v7h7z" fill="#6f98e4"/></svg></button>
                      <button type="button" aria-label="重做"><svg viewBox="0 0 16 16"><path d="M11.500 7C9 3 3 3 3.500 8c.2 2 1.500 4 4 5.500" fill="none" stroke="#6f98e4" stroke-width="2.600"/><path d="M14 2v7H7z" fill="#7fa6ea"/></svg></button>
                      <button type="button" aria-label="全屏"><svg viewBox="0 0 16 16"><path d="M.5 1.500h15v13H.5z" fill="#f5f5f5" stroke="#aaa"/><path d="M1 3h14" stroke="#bbb"/><path d="M3 5l3 3M13 5l-3 3M3 13l3-3M13 13l-3-3" stroke="#d33" stroke-width="1.600"/></svg></button>
                      <button type="button" aria-label="源码"><svg viewBox="0 0 16 16"><path d="M4.500 2.500h9v12h-8z" fill="#fff" stroke="#333" stroke-width="1.300"/><path d="M7 1h4v2.500H7zM6.500 6.500h5M6.500 9h5M7 11.500h4.500" stroke="#555" fill="#ccc"/><path d="M1 3l5 8" stroke="#333" stroke-width="1.600"/></svg></button>
                      <button type="button" aria-label="帮助"><svg viewBox="0 0 16 16"><circle cx="8" cy="8" r="6.800" fill="#fff" stroke="#4a79d8"/><circle cx="8" cy="8" r="5.400" fill="#3f74dc"/><path d="M6 6.500c0-3 4.300-2.500 4 0-.2 1.300-2 1.300-2 3M8 10.500v1.500" fill="none" stroke="#fff" stroke-width="1.500"/></svg></button>
                    </div>
                    <textarea id="comment"></textarea>
                  </div></div>
                <div class="frow d-flex"><span class="flabel"></span><button type="button" class="save">保存</button></div>
              </form>
              <fieldset class="box hist"><legend>历史记录 <button class="mini" aria-label="倒序"><svg><use href="#up"/></svg></button> <button class="mini" aria-label="展开"><svg><use href="#plus"/></svg></button></legend>
                <ol class="log">
                  <li>2016-04-01 10:38:30, 由 <b>东野</b> 解决，方案为 <b>设计如此</b> 。</li>
                  <li>2016-04-01 10:39:53, 由 <b>东野</b> 解决，方案为 <b>设计如此</b> 。</li>
                  <li>2016-04-01 10:41:21, 由 <b>少游</b> 解决，方案为 <b>设计如此</b> 。<div class="note">需求如此设计</div></li>
                  <li>2016-04-01 10:41:56, 由 <b>少游</b> 解决，方案为 <b>已解决</b> 。<div class="note">已修复</div></li>
                  <li>2016-04-01 10:42:24, 由 <b>少游</b> 解决，方案为 <b>已解决</b> 。<div class="note">已修复</div></li>
                  <li>2016-04-01 11:16:36, 由 <b>少游</b> 解决，方案为 <b>设计如此</b> 。<div class="note">保留两位小说</div></li>
                  <li>2016-04-01 13:13:46, 由 <b>少游</b> 解决，方案为 <b>设计如此</b> 。<div class="note">请看需求文档，而且提的这些东西要符合分站用户使用。</div></li>
                  <li>2016-04-01 14:26:20, 由 <b>小小</b> 解决，方案为 <b>重复Bug</b> <a href="#">#168 成本核算工具，是不可以选多款大地砖的，但程序未判断这个逻辑</a> 。</li>
                  <li>2016-04-01 14:27:01, 由 <b>小小</b> 解决，方案为 <b>不予解决</b> 。</li>
                  <li>2016-04-01 14:27:30, 由 <b>小小</b> 解决，方案为 <b>不予解决</b> 。</li>
                  <li>2016-04-05 10:54:03, 由 <b>少游</b> 解决，方案为 <b>已解决</b> 。<div class="note">已修复</div></li>
                  <li>2016-04-05 10:56:22, 由 <b>少游</b> 解决，方案为 <b>外部原因</b> 。<div class="note">材料费计算正确，物流费用计算不正确</div></li>
                </ol>
              </fieldset>
            </div>
          </div>
        </div>
      </main>
      <div class="sbar d-flex flex-column align-items-center flex-shrink-0"><svg width="13" height="17" viewBox="0 0 13 17"><path d="M3 11h7L6.500 7z" fill="#a3a3a3"/></svg><div class="sbar-thumb w-100"></div><svg class="mt-auto" width="13" height="17" viewBox="0 0 13 17"><path d="M3 6h7L6.500 10z" fill="#505050"/></svg></div>
    </div>
  </div>
</div>
</body>
</html>
